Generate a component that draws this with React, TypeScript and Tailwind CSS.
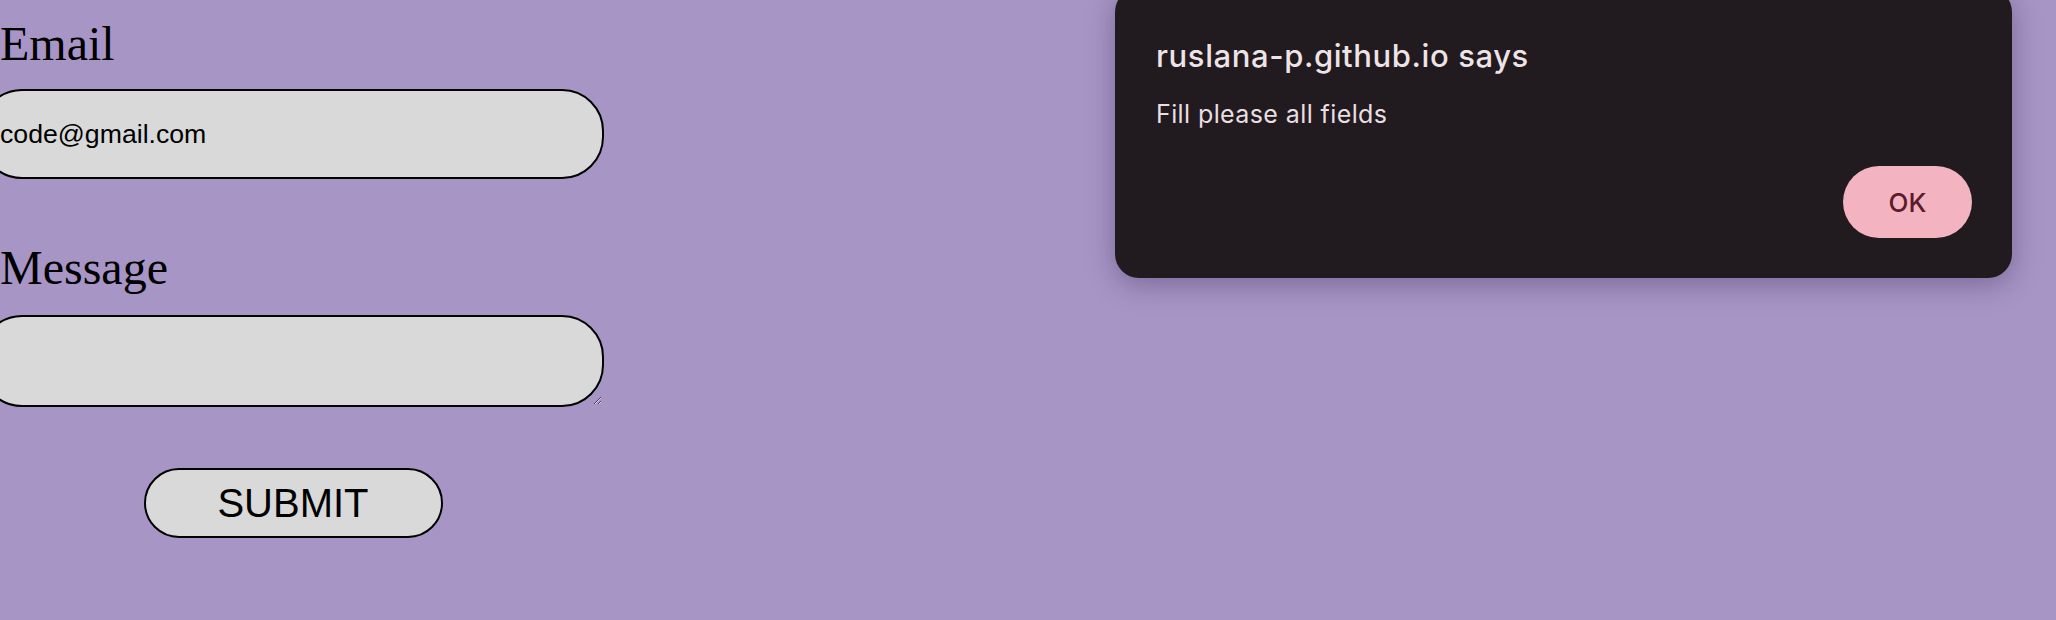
import React from 'react';

const Field = ({ label, children, top }: { label: string; children: React.ReactNode; top: string }) => (
  <div className={`flex flex-col ${top}`}>
    <label className="font-['Liberation_Serif',serif] text-[48px] leading-[48px] text-black">{label}</label>
    {children}
  </div>
);

export default function App() {
  return (
    <div className="relative h-[620px] w-full overflow-hidden bg-[#a795c6]">
      {/* contact form */}
      <form className="flex w-[604px] flex-col pt-[20px]">
        <Field label="Email" top="">
          <input
            type="email"
            defaultValue="code@gmail.com"
            className="-ml-[20px] mt-[21px] h-[90px] w-[624px] rounded-[42px] border-2 border-black bg-[#d9d9d9] pl-[18px] font-['Liberation_Sans',Arial,sans-serif] text-[26.67px] text-black outline-none"
          />
        </Field>
        <Field label="Message" top="mt-[65px]">
          <textarea
            className="-ml-[20px] mt-[23px] h-[92px] w-[624px] rounded-[42px] border-2 border-black bg-[#d9d9d9] pl-[18px] font-['Liberation_Sans',Arial,sans-serif] text-[26.67px] text-black outline-none"
          />
        </Field>
        <div className="mt-[61px] flex justify-center">
          <button
            type="button"
            className="-ml-[18px] h-[70px] w-[299px] rounded-full border-2 border-black bg-[#d9d9d9] font-['Liberation_Sans',Arial,sans-serif] text-[40px] leading-none text-black"
          >
            SUBMIT
          </button>
        </div>
      </form>

      {/* browser alert */}
      <div className="absolute left-[1115px] top-[-12px] flex w-[897px] flex-col rounded-[24px] bg-[#211a1e] pb-[40px] pl-[41px] pr-[40px] pt-[52px] font-['Inter',sans-serif] shadow-[0_6px_28px_rgba(40,20,60,0.35)]">
        <h2 className="text-[31px] font-medium leading-[32px] tracking-[0.6px] text-[#eee3e6]">ruslana-p.github.io says</h2>
        <p className="mt-[28px] text-[25px] leading-[28px] tracking-[0.4px] text-[#e9dfe2]">Fill please all fields</p>
        <div className="mt-[38px] flex justify-end">
          <button
            type="button"
            className="h-[72px] w-[129px] rounded-full bg-[#f4b3c1] text-[26px] font-medium text-[#5b1b2d]"
          >
            OK
          </button>
        </div>
      </div>
    </div>
  );
}
